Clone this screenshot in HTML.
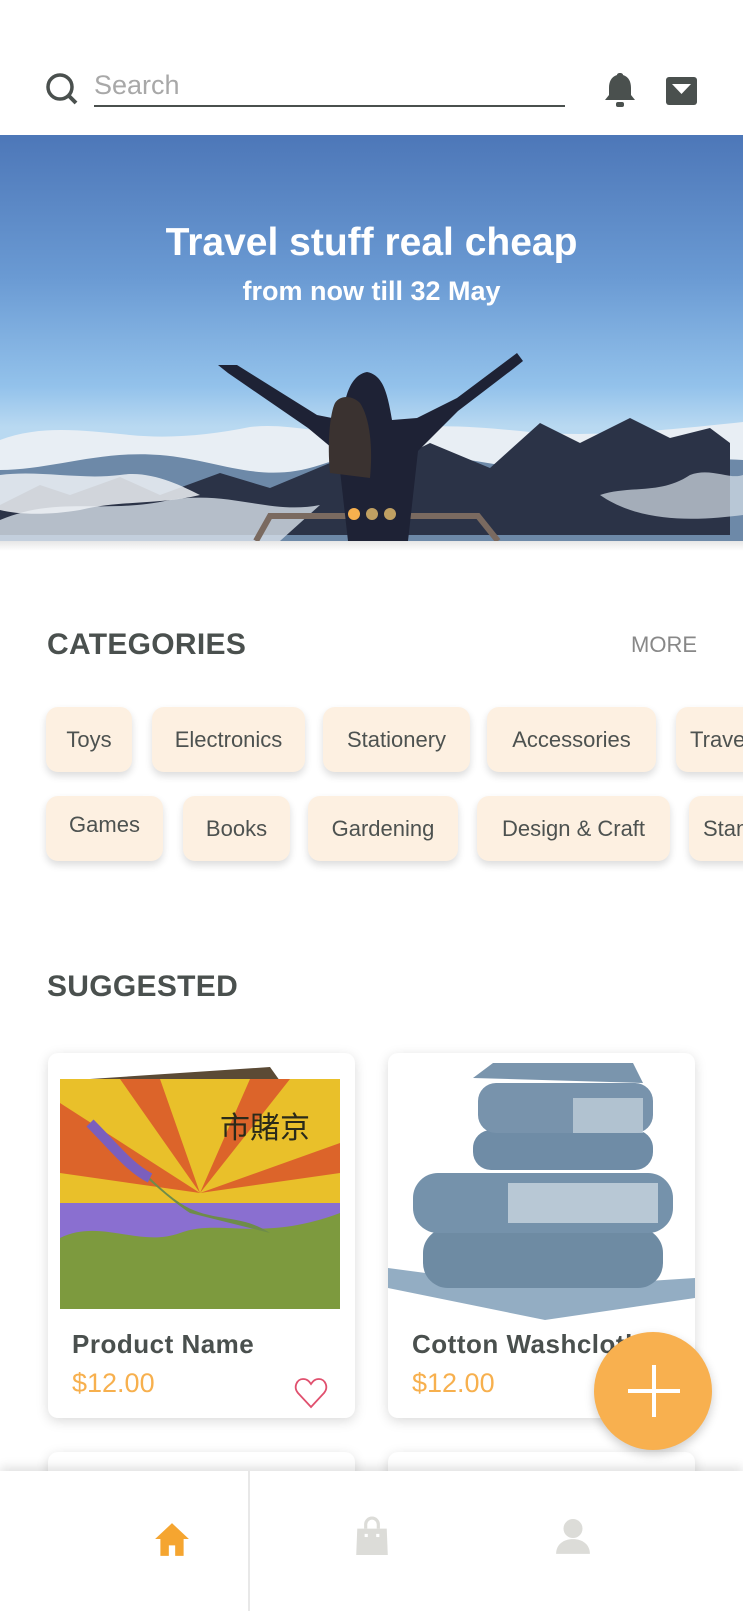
<!DOCTYPE html>
<html><head><meta charset="utf-8"><style>
*{margin:0;padding:0;box-sizing:border-box}
body{width:743px;height:1611px;overflow:hidden;background:#fff;font-family:"Liberation Sans","Noto Sans CJK SC",sans-serif;position:relative}
.abs{position:absolute}
.chip{position:absolute;height:65px;background:#fdf0e1;border-radius:12px;box-shadow:0 4px 8px rgba(0,0,0,.14);color:#4d5250;font-size:22px;display:flex;align-items:center;justify-content:center;white-space:nowrap;overflow:hidden}
.card{position:absolute;background:#fff;border-radius:10px;box-shadow:0 3px 12px rgba(0,0,0,.15);overflow:hidden}
.h{position:absolute;font-weight:bold;color:#4a504e;font-size:30px;letter-spacing:.3px}
.pn{position:absolute;font-size:26px;font-weight:bold;color:#4a504e;letter-spacing:.5px;white-space:nowrap}
.pp{position:absolute;font-size:27px;color:#f7b04e}
</style></head><body>

<!-- header -->
<svg class="abs" style="left:44px;top:72px" width="36" height="36" viewBox="0 0 36 36"><circle cx="16" cy="15" r="12" fill="none" stroke="#4a504e" stroke-width="3.5"/><line x1="25" y1="24" x2="32" y2="31" stroke="#4a504e" stroke-width="4"/></svg>
<div class="abs" style="left:94px;top:70px;font-size:27px;color:#a8a8a8">Search</div>
<div class="abs" style="left:94px;top:105px;width:471px;height:2px;background:#4a504e"></div>
<svg class="abs" style="left:603px;top:72px" width="34" height="36" viewBox="0 0 34 36"><path d="M17 1c2 0 3 1 3 2 6 2 8 7 8 13v7l4 5H2l4-5v-7c0-6 2-11 8-13 0-1 1-2 3-2z" fill="#4a504e"/><rect x="13" y="30" width="8" height="5" rx="2" fill="#4a504e"/></svg>
<svg class="abs" style="left:665px;top:76px" width="33" height="30" viewBox="0 0 33 30"><rect x="1" y="1" width="31" height="28" rx="3" fill="#4a504e"/><path d="M7 8h19l-9.5 10z" fill="#fff"/></svg>

<!-- banner -->
<div class="abs" style="left:0;top:135px;width:743px;height:406px;overflow:hidden;background:linear-gradient(180deg,#4d77b8 0%,#6a9ad3 35%,#93c2eb 62%,#b9d9f1 72%)">
<svg width="743" height="406" viewBox="0 0 743 406" style="position:absolute;left:0;top:0">
<path d="M0 305c40-15 80-10 130-5 40 4 80 0 120-8 40-5 80 10 120 5 60-10 110-5 160 0 60 5 120 0 213-10V406H0z" fill="#e8eef4"/>
<path d="M0 335c50 0 100-20 160-15s100 30 160 10c60-20 120-10 180 0s160-10 243-5V406H0z" fill="#6d89a8"/>
<path d="M0 370l40-20 30 10 50-18 40 18 60-22 50 15 60-25 40 10 60-30 60 25 50-45 40 20 50-25 40 20 40-10 20 15v92H0z" fill="#2b3347"/>
<path d="M0 385c60-25 100-5 170-20 60-10 100 15 150 5l-40 36H0z" fill="#d8e1ea" opacity=".8"/>
<path d="M0 340c40-5 80 5 120 0 30-5 60 10 80 20-40 10-80 5-120 15-30 5-60 5-80 0z" fill="#eef2f6" opacity=".85"/>
<path d="M600 360c30-10 60 0 90-20 20-8 40 5 53 0v40c-40 5-100 10-143-20z" fill="#d8e1ea" opacity=".7"/>
<path d="M256 406l14-25h208l20 25" fill="none" stroke="#7a6a60" stroke-width="6"/>
<path d="M218 230l10 8 80 55 30 25 10 88h60l10-90 40-40 55-42 10-8-6-8-60 45-40 20-25 2c-5-30-10-45-25-48-15 3-22 20-25 48l-25-5-80-50z" fill="#1e2235"/>
<path d="M335 268c-5 10-8 40-5 70l40 5c3-30 0-60-10-75-8-8-20-8-25 0z" fill="#3a3230"/>
</svg>
<div class="abs" style="left:0;top:86px;width:743px;text-align:center;color:#fff;font-weight:bold;font-size:39px">Travel stuff real cheap</div>
<div class="abs" style="left:0;top:141px;width:743px;text-align:center;color:#fff;font-weight:bold;font-size:27px">from now till 32 May</div>
<div class="abs" style="left:348px;top:373px;width:12px;height:12px;border-radius:50%;background:#f7b04e"></div>
<div class="abs" style="left:366px;top:373px;width:12px;height:12px;border-radius:50%;background:#c0a062"></div>
<div class="abs" style="left:384px;top:373px;width:12px;height:12px;border-radius:50%;background:#c0a062"></div>
</div>
<div class="abs" style="left:0;top:541px;width:743px;height:10px;background:linear-gradient(#e6e6e6,#fff)"></div>

<!-- categories -->
<div class="h" style="left:47px;top:628px">CATEGORIES</div>
<div class="abs" style="left:631px;top:632px;font-size:22px;color:#888">MORE</div>
<div class="chip" style="left:46px;top:707px;width:86px">Toys</div>
<div class="chip" style="left:152px;top:707px;width:153px">Electronics</div>
<div class="chip" style="left:323px;top:707px;width:147px">Stationery</div>
<div class="chip" style="left:487px;top:707px;width:169px">Accessories</div>
<div class="chip" style="left:676px;top:707px;width:90px;justify-content:flex-start;padding-left:14px">Travel</div>
<div class="chip" style="left:46px;top:796px;width:117px;align-items:flex-start;padding-top:16px">Games</div>
<div class="chip" style="left:183px;top:796px;width:107px">Books</div>
<div class="chip" style="left:308px;top:796px;width:150px">Gardening</div>
<div class="chip" style="left:477px;top:796px;width:193px">Design &amp; Craft</div>
<div class="chip" style="left:689px;top:796px;width:80px;justify-content:flex-start;padding-left:14px">Stamps</div>

<!-- suggested -->
<div class="h" style="left:47px;top:970px">SUGGESTED</div>

<div class="card" style="left:48px;top:1053px;width:307px;height:365px">
<svg style="position:absolute;left:12px;top:10px" width="280" height="250" viewBox="0 0 280 250">
<path d="M30 16l180-12 10 14z" fill="#5b4a35"/>
<rect x="0" y="16" width="280" height="230" fill="#e9c02a"/>
<path d="M0 40l140 90L60 16h40l40 114L190 16h40l-90 114 140-50v30L140 130 0 110z" fill="#d9532a" opacity=".85"/>
<rect x="0" y="140" width="280" height="40" fill="#8a6fd0"/>
<path d="M0 175c40-20 80 10 120-5s80 10 160-20v96H0z" fill="#7d9a3e"/>
<path d="M30 60c30 30 70 70 100 90l80 20c-30-20-60-10-90-30-30-20-60-60-90-80z" fill="#6e8c4a"/>
<path d="M30 60c25 25 40 45 60 55" stroke="#7b5fbd" stroke-width="10" fill="none"/>
<text x="160" y="75" font-size="30" font-family="Noto Sans CJK SC" fill="#2a2a1a">市賭京</text>
</svg>
<div class="pn" style="left:24px;top:276px">Product Name</div>
<div class="pp" style="left:24px;top:315px">$12.00</div>
<svg style="position:absolute;left:246px;top:324px" width="34" height="32" viewBox="0 0 34 32"><path d="M17 30L4 16C-1 10 3 2 9 2c4 0 6 2 8 5 2-3 4-5 8-5 6 0 10 8 5 14z" fill="none" stroke="#e0506e" stroke-width="1.8"/></svg>
</div>

<div class="card" style="left:388px;top:1053px;width:307px;height:365px">
<svg style="position:absolute;left:0;top:5px" width="307" height="262" viewBox="0 0 307 262">
<path d="M0 210l150 20 157-10v20l-150 22L0 230z" fill="#93adc3"/>
<rect x="35" y="170" width="240" height="60" rx="25" fill="#6e8ba3"/>
<rect x="25" y="115" width="260" height="60" rx="25" fill="#7592ab"/>
<path d="M120 125h150v40H120z" fill="#c9d6e0" opacity=".8"/>
<rect x="85" y="72" width="180" height="40" rx="18" fill="#6f8ca6"/>
<rect x="90" y="25" width="175" height="50" rx="18" fill="#7893ac"/>
<path d="M185 40h70v35h-70z" fill="#c9d6e0" opacity=".7"/>
<path d="M85 20l20-15h140l10 20z" fill="#7a95ad"/>
</svg>
<div class="pn" style="left:24px;top:276px">Cotton Washcloths</div>
<div class="pp" style="left:24px;top:315px">$12.00</div>
</div>

<div class="card" style="left:48px;top:1452px;width:307px;height:100px"></div>
<div class="card" style="left:388px;top:1452px;width:307px;height:100px"></div>

<!-- FAB -->
<div class="abs" style="left:594px;top:1332px;width:118px;height:118px;border-radius:50%;background:#f8b04f;box-shadow:0 4px 10px rgba(0,0,0,.2)"></div>
<div class="abs" style="left:628px;top:1389px;width:52px;height:4px;background:#fff"></div>
<div class="abs" style="left:652px;top:1365px;width:4px;height:52px;background:#fff"></div>

<!-- bottom nav -->
<div class="abs" style="left:0;top:1471px;width:743px;height:140px;background:#fff;box-shadow:0 -4px 10px rgba(0,0,0,.12)"></div>
<div class="abs" style="left:248px;top:1471px;width:2px;height:140px;background:#e8e8e8"></div>
<svg class="abs" style="left:153px;top:1520px" width="38" height="38" viewBox="0 0 36 36"><path d="M18 3L2 18h5v16h8V24h6v10h8V18h5z" fill="#f5a530"/></svg>
<svg class="abs" style="left:355px;top:1516px" width="34" height="40" viewBox="0 0 32 38"><path d="M10 12V8a6 6 0 0112 0v4" fill="none" stroke="#dcdcd8" stroke-width="3"/><path d="M2 12h28l1 25H1z" fill="#dcdcd8"/><rect x="9" y="17" width="3" height="3" fill="#fff"/><rect x="20" y="17" width="3" height="3" fill="#fff"/></svg>
<svg class="abs" style="left:555px;top:1518px" width="36" height="38" viewBox="0 0 34 36"><circle cx="17" cy="10" r="9" fill="#dcdcd8"/><path d="M1 34c0-9 7-14 16-14s16 5 16 14z" fill="#dcdcd8"/></svg>
</body></html>
